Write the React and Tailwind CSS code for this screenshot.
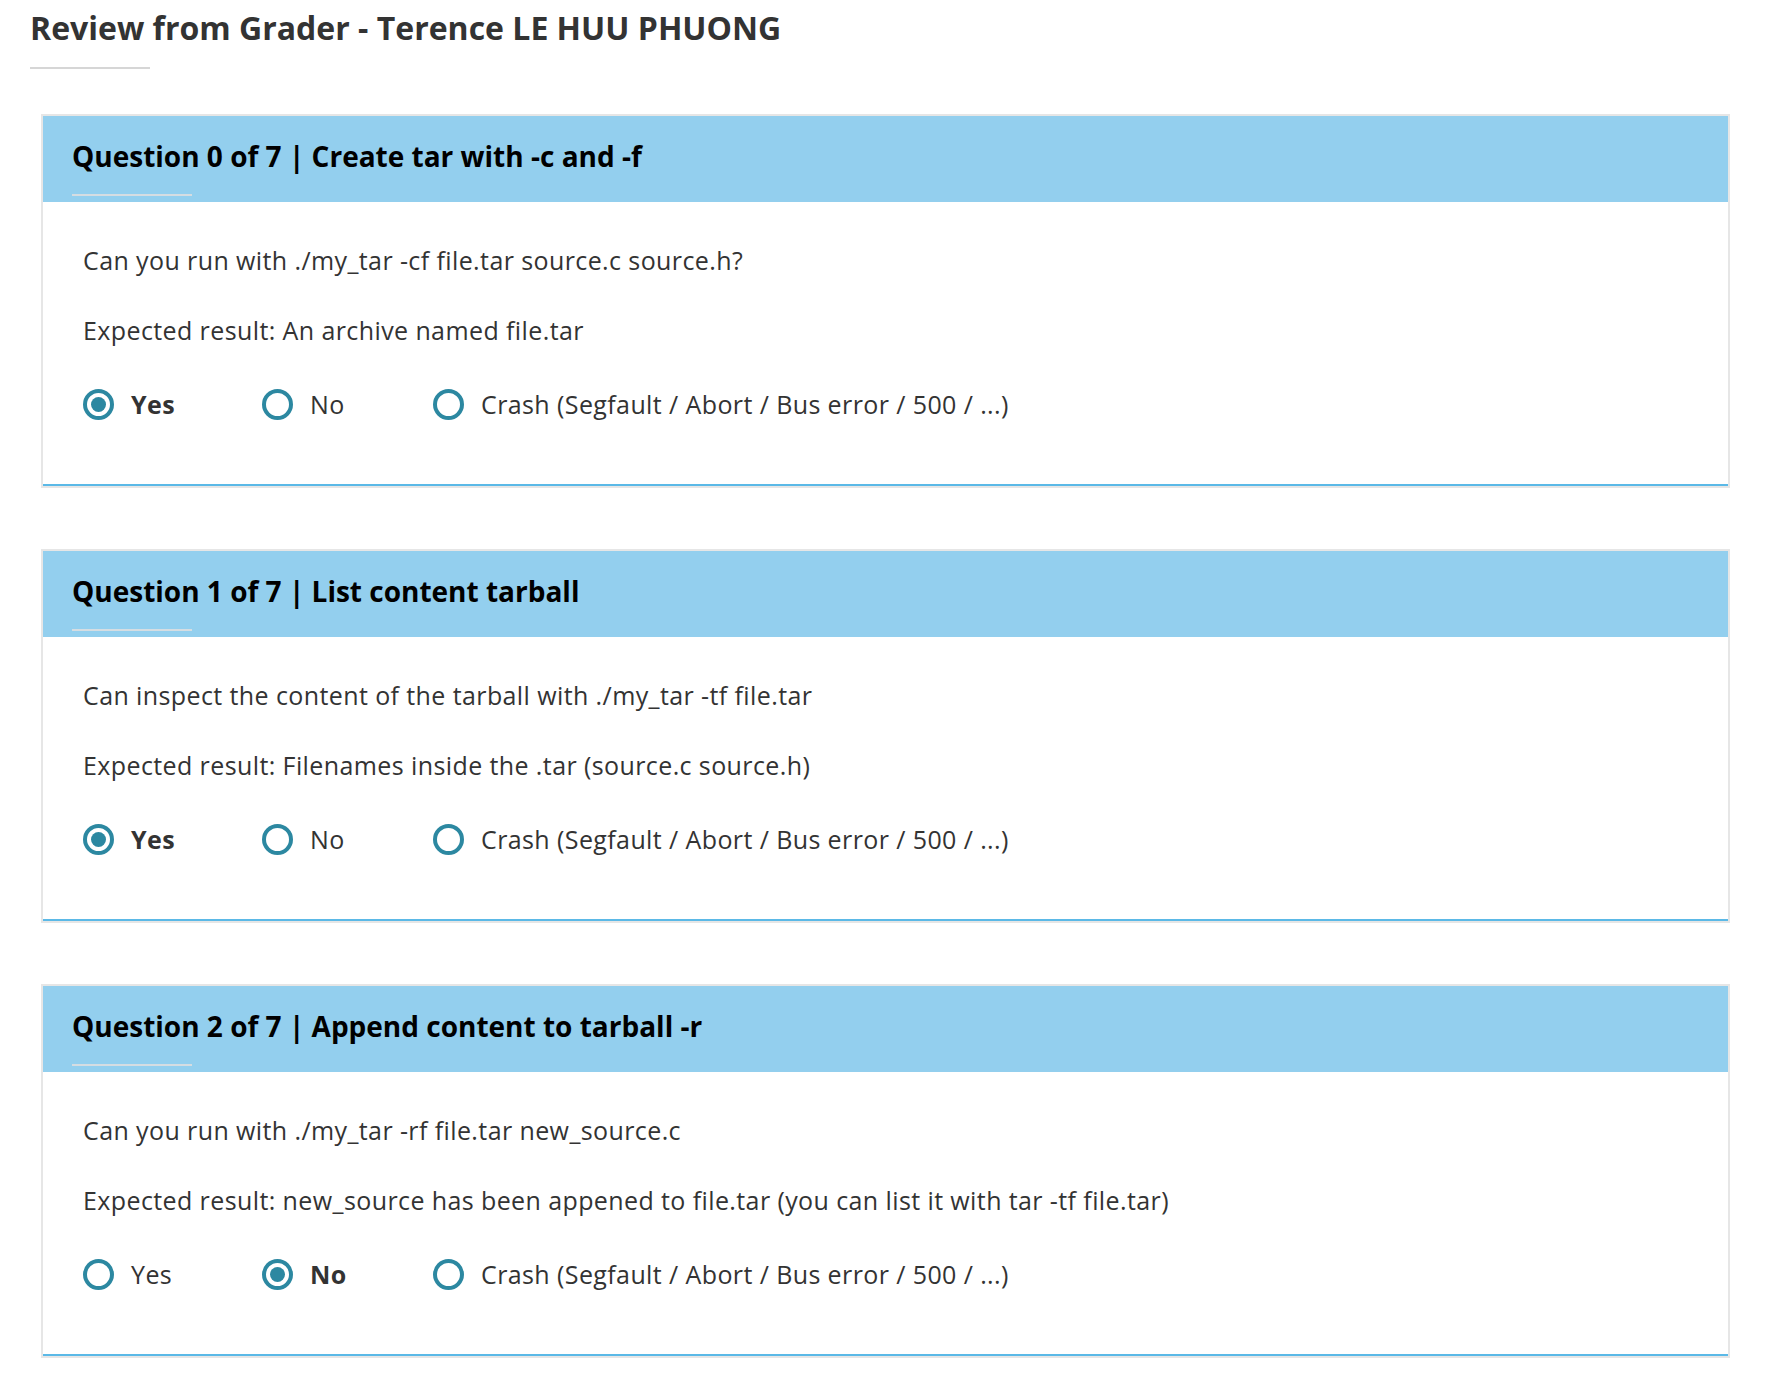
import React, { useState } from 'react';

const questions = [
  {
    title: 'Question 0 of 7 | Create tar with -c and -f',
    text: 'Can you run with ./my_tar -cf file.tar source.c source.h?',
    expected: 'Expected result: An archive named file.tar',
    answer: 'yes',
  },
  {
    title: 'Question 1 of 7 | List content tarball',
    text: 'Can inspect the content of the tarball with ./my_tar -tf file.tar',
    expected: 'Expected result: Filenames inside the .tar (source.c source.h)',
    answer: 'yes',
  },
  {
    title: 'Question 2 of 7 | Append content to tarball -r',
    text: 'Can you run with ./my_tar -rf file.tar new_source.c',
    expected: 'Expected result: new_source has been appened to file.tar (you can list it with tar -tf file.tar)',
    answer: 'no',
  },
];

const options = [
  { value: 'yes', label: 'Yes', width: 'w-[179px]' },
  { value: 'no', label: 'No', width: 'w-[171px]' },
  { value: 'crash', label: 'Crash (Segfault / Abort / Bus error / 500 / ...)', width: '' },
];

const Radio = ({ checked, label, width, onClick }) => (
  <button onClick={onClick} className={`flex items-center h-[32px] bg-transparent border-none p-0 cursor-pointer text-left ${width}`}>
    <span className="w-[31px] h-[31px] rounded-full border-[4px] border-[#2c88a1] bg-white flex items-center justify-center shrink-0">
      {checked && <span className="w-[15px] h-[15px] rounded-full bg-[#2c88a1]" />}
    </span>
    <span className={`ml-[17px] text-[25px] leading-[32px] tracking-[0.4px] text-[#333] ${checked ? 'font-bold' : ''}`}>{label}</span>
  </button>
);

const QuestionCard = ({ q, first }) => {
  const [answer, setAnswer] = useState(q.answer);
  return (
    <div className={`ml-[11px] border-2 border-[#e6e6e6] ${first ? 'mt-[45px]' : 'mt-[61px]'}`}>
      <div className="bg-[#93cfee] pl-[29px] pt-[22px] pb-[6px]">
        <h2 className="m-0 text-[28px] leading-[36px] font-bold text-black">{q.title}</h2>
        <div className="mt-[20px] w-[120px] h-[2px] bg-[#d5dde2]" />
      </div>
      <div className="bg-white pl-[40px] pt-[42px] pb-[64px] border-b-2 border-[#5bb9e7]">
        <p className="m-0 text-[25px] leading-[32px] tracking-[0.4px] text-[#333]">{q.text}</p>
        <p className="m-0 mt-[38px] text-[25px] leading-[32px] tracking-[0.4px] text-[#333]">{q.expected}</p>
        <div className="flex items-center mt-[42px]">
          {options.map(o => (
            <Radio key={o.value} label={o.label} width={o.width} checked={answer === o.value} onClick={() => setAnswer(o.value)} />
          ))}
        </div>
      </div>
    </div>
  );
};

export default function App() {
  return (
    <div className="min-h-screen bg-white pl-[30px] pr-[38px] pt-[8px] pb-[20px]" style={{ fontFamily: '"Open Sans", "Noto Sans", sans-serif' }}>
      <h1 className="m-0 text-[32px] leading-[40px] font-bold text-[#333]">Review from Grader - Terence LE HUU PHUONG</h1>
      <div className="mt-[19px] w-[120px] h-[2px] bg-[#d6d6d6]" />
      {questions.map((q, i) => <QuestionCard key={i} q={q} first={i === 0} />)}
    </div>
  );
}
